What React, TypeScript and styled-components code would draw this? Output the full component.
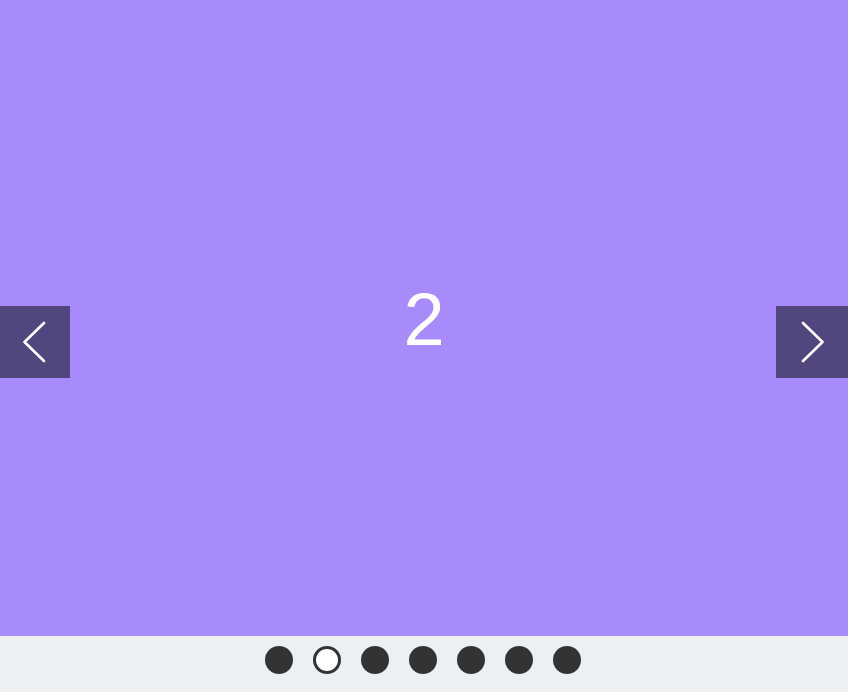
import React from "react";
import styled, { createGlobalStyle } from "styled-components";

const Global = createGlobalStyle`
  html, body { margin: 0; padding: 0; }
  body { font-family: "Liberation Sans", Arial, sans-serif; background: #edf0f3; }
`;

const Wrap = styled.div`
  width: 848px;
  height: 692px;
  display: flex;
  flex-direction: column;
`;

const Slide = styled.div`
  position: relative;
  height: 636px;
  background: #a78bfa;
  display: flex;
  align-items: center;
  justify-content: center;
`;

const Number = styled.div`
  color: #fff;
  font-size: 74px;
  line-height: 1;
  margin-top: 4px;
`;

const NavButton = styled.button<{ $side: "left" | "right" }>`
  position: absolute;
  top: 306px;
  ${(p) => (p.$side === "left" ? "left: 0; width: 70px;" : "right: 0; width: 72px;")}
  height: 72px;
  border: none;
  padding: 0;
  background: #52467f;
  display: flex;
  align-items: center;
  justify-content: center;
  cursor: pointer;
`;

const Footer = styled.div`
  height: 56px;
  box-sizing: border-box;
  padding: 10px 2px 0 0;
  background: #edf0f3;
  display: flex;
  align-items: flex-start;
  justify-content: center;
  gap: 20px;
`;

const Dot = styled.span<{ $active?: boolean }>`
  width: 28px;
  height: 28px;
  box-sizing: border-box;
  border-radius: 50%;
  background: ${(p) => (p.$active ? "#fff" : "#333")};
  border: ${(p) => (p.$active ? "3px solid #333" : "none")};
`;

const Chevron = ({ dir }: { dir: "left" | "right" }) => (
  <svg width="24" height="42" viewBox="0 0 24 42">
    <polyline
      points={dir === "left" ? "21,2 1.5,21 21,40" : "3,2 22.5,21 3,40"}
      fill="none"
      stroke="#fff"
      strokeWidth="2.6"
      strokeLinecap="round"
      strokeLinejoin="round"
    />
  </svg>
);

export default function App() {
  return (
    <Wrap>
      <Global />
      <Slide>
        <NavButton $side="left" aria-label="previous">
          <Chevron dir="left" />
        </NavButton>
        <Number>2</Number>
        <NavButton $side="right" aria-label="next">
          <Chevron dir="right" />
        </NavButton>
      </Slide>
      <Footer>
        {[0, 1, 2, 3, 4, 5, 6].map((i) => (
          <Dot key={i} $active={i === 1} />
        ))}
      </Footer>
    </Wrap>
  );
}
